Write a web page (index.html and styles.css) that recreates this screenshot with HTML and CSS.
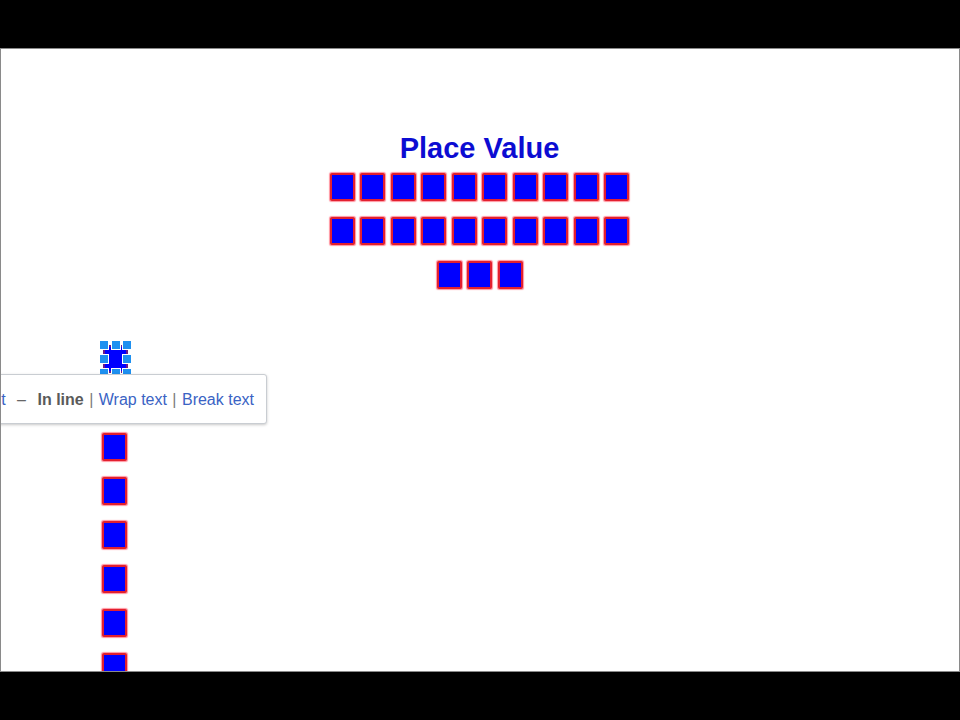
FILE: index.html
```html
<!DOCTYPE html>
<html>
<head>
<meta charset="utf-8">
<title>Place Value</title>
<link rel="stylesheet" href="styles.css">
</head>
<body>
<div class="page">
  <div class="header">
    <h1 class="title">Place Value</h1>
    <div class="rows">
      <div class="row">
        <span class="block"></span><span class="block"></span><span class="block"></span><span class="block"></span><span class="block"></span>
        <span class="block"></span><span class="block"></span><span class="block"></span><span class="block"></span><span class="block"></span>
      </div>
      <div class="row">
        <span class="block"></span><span class="block"></span><span class="block"></span><span class="block"></span><span class="block"></span>
        <span class="block"></span><span class="block"></span><span class="block"></span><span class="block"></span><span class="block"></span>
      </div>
      <div class="row">
        <span class="block"></span><span class="block"></span><span class="block"></span>
      </div>
    </div>
  </div>
  <div class="column">
    <span class="block selected">
      <i class="handle h-tl"></i><i class="handle h-tc"></i><i class="handle h-tr"></i>
      <i class="handle h-ml"></i><i class="handle h-mr"></i>
      <i class="handle h-bl"></i><i class="handle h-bc"></i><i class="handle h-br"></i>
    </span>
    <span class="block"></span>
    <span class="block"></span>
    <span class="block"></span>
    <span class="block"></span>
    <span class="block"></span>
    <span class="block"></span>
    <span class="block"></span>
  </div>
  <div class="bubble">
    <a class="link" href="#">t</a><span class="dash"> – </span><b class="current">In line</b><span class="sep"> | </span><a class="link" href="#">Wrap text</a><span class="sep"> | </span><a class="link" href="#">Break text</a>
  </div>
</div>
</body>
</html>
```
FILE: styles.css
```css
html, body {
  margin: 0;
  padding: 0;
  background: #000;
}
body {
  padding-top: 48px;
  height: 720px;
  box-sizing: border-box;
  overflow: hidden;
  font-family: "Liberation Sans", Arial, sans-serif;
}
.page {
  position: relative;
  box-sizing: border-box;
  width: 960px;
  height: 624px;
  background: #fff;
  border: 1px solid #8a8a8a;
  overflow: hidden;
}
.header {
  display: flex;
  flex-direction: column;
  align-items: center;
  padding-top: 82px;
  padding-right: 1px;
}
.title {
  margin: 0;
  font-size: 29px;
  line-height: 34px;
  font-weight: bold;
  color: #0c0cd2;
}
.rows {
  margin-top: 8px;
  display: flex;
  flex-direction: column;
  align-items: center;
  gap: 16px;
}
.row {
  display: flex;
  gap: 5.5px;
}
.block {
  display: block;
  box-sizing: border-box;
  width: 25px;
  height: 28px;
  background: #0000ff;
  border: 2px solid #e2202f;
  border-radius: 2px;
  box-shadow: 0 0 1px 0.5px rgba(255, 60, 80, 0.55);
}
.column {
  display: flex;
  flex-direction: column;
  align-items: flex-start;
  gap: 16px;
  margin-top: 56px;
  margin-left: 101px;
}
.selected {
  position: relative;
  margin-left: 1px;
  border-color: #6a1a8a;
  box-shadow: none;
}
.handle {
  position: absolute;
  width: 10px;
  height: 10px;
  background: #1e90f0;
  border: 1px solid #fff;
  box-sizing: border-box;
}
.h-tl { left: -6px; top: -7px; }
.h-tc { left: 5.5px; top: -7px; }
.h-tr { right: -6px; top: -7px; }
.h-ml { left: -6px; top: 7px; }
.h-mr { right: -6px; top: 7px; }
.h-bl { left: -6px; bottom: -7px; }
.h-bc { left: 5.5px; bottom: -7px; }
.h-br { right: -6px; bottom: -7px; }
.bubble {
  position: absolute;
  top: 325px;
  right: 692px;
  white-space: nowrap;
  background: #fff;
  border: 1px solid #c9cdd2;
  border-radius: 3px;
  box-shadow: 0 1px 3px rgba(0, 0, 0, 0.22);
  padding: 15px 12px 14px 10px;
  font-size: 16px;
  line-height: 19px;
  color: #666;
}
.link {
  color: #3a63c4;
  text-decoration: none;
}
.dash {
  padding: 0 7px;
  color: #666;
}
.current {
  color: #5a5a5a;
}
.sep {
  padding: 0 1px;
  color: #7a7a7a;
}
```
